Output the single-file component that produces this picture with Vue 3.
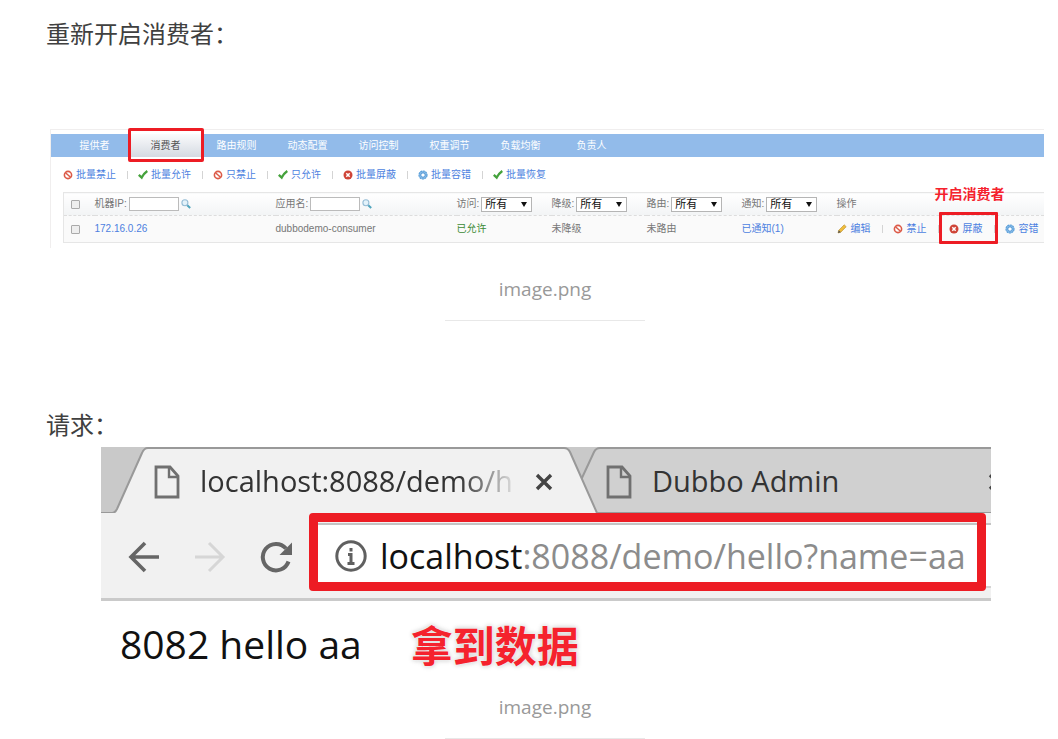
<script setup>
const tabs = ['提供者', '消费者', '路由规则', '动态配置', '访问控制', '权重调节', '负载均衡', '负责人']
const actions = [
  { icon: 'ban', text: '批量禁止' },
  { icon: 'check', text: '批量允许' },
  { icon: 'ban', text: '只禁止' },
  { icon: 'check', text: '只允许' },
  { icon: 'cross', text: '批量屏蔽' },
  { icon: 'gear', text: '批量容错' },
  { icon: 'check', text: '批量恢复' },
]
const filters = [
  { id: 'access', text: '访问:' },
  { id: 'degrade', text: '降级:' },
  { id: 'route', text: '路由:' },
  { id: 'notify', text: '通知:' },
]
const operations = [
  { icon: 'pencil', text: '编辑' },
  { icon: 'ban', text: '禁止' },
  { icon: 'cross', text: '屏蔽', marked: true },
  { icon: 'gear', text: '容错' },
]
</script>

<template>
  <svg class="defs" aria-hidden="true">
    <symbol id="ban" viewBox="0 0 10 10">
      <circle cx="5" cy="5" r="3.6" fill="#fff" stroke="#dc5a48" stroke-width="1.6" />
      <path d="M2.5 2.7l5 4.6" stroke="#dc5a48" stroke-width="1.5" />
    </symbol>
    <symbol id="check" viewBox="0 0 10 10">
      <path d="M0.8 4.8L3.7 7.6C5 5 6.6 2.9 9.3 1" fill="none" stroke="#45a23c" stroke-width="2.3" />
    </symbol>
    <symbol id="cross" viewBox="0 0 10 10">
      <circle cx="5" cy="5" r="4.5" fill="#cf4437" />
      <path d="M3.3 3.3l3.4 3.4M6.7 3.3L3.3 6.7" stroke="#fff" stroke-width="1.5" />
    </symbol>
    <symbol id="gear" viewBox="0 0 10 10">
      <circle cx="5" cy="5" r="4" fill="#8ec0ea" stroke="#5b9fd9" stroke-width="1.2" stroke-dasharray="2 .6" />
      <circle cx="5" cy="5" r="2.3" fill="none" stroke="#4a91d1" stroke-width=".8" />
      <circle cx="5" cy="5" r="1.6" fill="#fff" />
    </symbol>
    <symbol id="pencil" viewBox="0 0 10 10">
      <path d="M1 9l.8-2.8L7.2.8l2 1.9L3.8 8.2z" fill="#f0bd3c" stroke="#b98b2c" stroke-width=".6" />
      <path d="M1 9l.8-2.8 2 2z" fill="#555" />
    </symbol>
    <symbol id="search" viewBox="0 0 10 10">
      <path d="M6 6l3.2 3" stroke="#4fa5bd" stroke-width="2" />
      <circle cx="3.9" cy="3.8" r="3" fill="#e3f2fa" stroke="#96bdd6" stroke-width="1.1" />
    </symbol>
    <symbol id="file" viewBox="0 0 26 34">
      <path d="M2 2h14l8 9v21H2z" fill="none" stroke="#707070" stroke-width="2.8" />
      <path d="M15 2v10h9" fill="none" stroke="#707070" stroke-width="2.4" />
    </symbol>
  </svg>

  <main class="article">
    <p class="lead">重新开启消费者：</p>

    <figure class="figure">
      <div class="admin">
        <nav class="tabs">
          <a v-for="(t, i) in tabs" :key="t" href="#" class="tab" :class="{ active: i === 1 }">{{ t }}</a>
        </nav>
        <div class="actions">
          <button v-for="a in actions" :key="a.text" type="button" class="act">
            <svg class="ico"><use :href="'#' + a.icon" /></svg>{{ a.text }}
          </button>
        </div>
        <table class="grid">
          <colgroup>
            <col class="c-check" /><col class="c-wide" /><col class="c-wide" />
            <col class="c-mid" /><col class="c-mid" /><col class="c-mid" /><col class="c-mid" /><col />
          </colgroup>
          <thead>
            <tr>
              <th><input type="checkbox" class="box" aria-label="全选" /></th>
              <th>
                <span class="field"><label for="ip">机器IP:</label><input id="ip" type="text" class="text" /><svg class="ico"><use href="#search" /></svg></span>
              </th>
              <th>
                <span class="field"><label for="app">应用名:</label><input id="app" type="text" class="text" /><svg class="ico"><use href="#search" /></svg></span>
              </th>
              <th v-for="f in filters" :key="f.id">
                <span class="field">
                  <label :for="f.id">{{ f.text }}</label>
                  <span class="pick"><select :id="f.id"><option>所有</option></select></span>
                </span>
              </th>
              <th>操作</th>
            </tr>
          </thead>
          <tbody>
            <tr>
              <td><input type="checkbox" class="box" aria-label="172.16.0.26" /></td>
              <td><a href="#">172.16.0.26</a></td>
              <td>dubbodemo-consumer</td>
              <td class="ok">已允许</td>
              <td>未降级</td>
              <td>未路由</td>
              <td><a href="#">已通知(1)</a></td>
              <td>
                <div class="ops">
                  <button v-for="o in operations" :key="o.text" type="button" class="act" :class="{ marked: o.marked }">
                    <svg class="ico"><use :href="'#' + o.icon" /></svg>{{ o.text }}
                    <span v-if="o.marked" class="note">开启消费者</span>
                  </button>
                </div>
              </td>
            </tr>
          </tbody>
        </table>
      </div>
      <figcaption>image.png</figcaption>
    </figure>

    <p class="lead second">请求：</p>

    <figure class="figure">
      <div class="browser">
        <div class="strip">
          <svg class="shapes" viewBox="0 0 890 66" preserveAspectRatio="xMinYMin slice" aria-hidden="true">
            <path d="M480 33L493 5Q495 1 499 1H1200V66H490z" fill="#d0d0d0" />
            <path d="M480 33L493 5Q495 1 499 1H1200M490 66H1200" fill="none" stroke="#999" stroke-width="2" />
            <path d="M0 66H11Q14 66 16 62L41 6Q43 1 47 1H463Q467 1 469 5L496 66z" fill="#f1f1f1" />
            <path d="M0 66H11Q14 66 16 62L41 6Q43 1 47 1H463Q467 1 469 5L496 66" fill="none" stroke="#999" stroke-width="2" />
          </svg>
          <div class="page-tab first">
            <svg class="file"><use href="#file" /></svg>
            <span class="title fade">localhost:8088/demo/h</span>
            <button type="button" class="close" aria-label="关闭">
              <svg viewBox="0 0 18 18"><path d="M2 2l14 14M16 2L2 16" stroke="#444" stroke-width="3.4" /></svg>
            </button>
          </div>
          <div class="page-tab other">
            <svg class="file"><use href="#file" /></svg>
            <span class="title">Dubbo Admin</span>
            <button type="button" class="close cut" aria-label="关闭">
              <svg viewBox="0 0 18 18"><path d="M2 2l14 14M16 2L2 16" stroke="#444" stroke-width="3.4" /></svg>
            </button>
          </div>
        </div>
        <div class="bar">
          <button type="button" class="nav" aria-label="后退">
            <svg viewBox="0 0 32 32"><path d="M31 17H3M17 3L3 17L17 31" fill="none" stroke="#666" stroke-width="3.6" /></svg>
          </button>
          <button type="button" class="nav" aria-label="前进">
            <svg viewBox="0 0 32 32"><path d="M1 17H29M15 3L29 17L15 31" fill="none" stroke="#d6d6d6" stroke-width="3" /></svg>
          </button>
          <button type="button" class="nav" aria-label="刷新">
            <svg viewBox="0 0 32 32">
              <path d="M26 8.5A13.2 13.2 0 1 0 28.5 21.5" fill="none" stroke="#666" stroke-width="4" />
              <path d="M32 2.5V15H19.5z" fill="#666" />
            </svg>
          </button>
          <div class="address">
            <svg class="info" viewBox="0 0 32 32">
              <circle cx="16" cy="16" r="14.2" fill="none" stroke="#606060" stroke-width="3" />
              <path d="M16 8v3.5M13 14.5h3V23M12.5 23.5h7" fill="none" stroke="#606060" stroke-width="3" />
            </svg>
            <span class="url"><b>localhost</b>:8088/demo/hello?name=aa</span>
          </div>
        </div>
        <div class="result">
          <span>8082 hello aa</span>
          <strong>拿到数据</strong>
        </div>
      </div>
      <figcaption class="tight">image.png</figcaption>
    </figure>
  </main>
</template>

<style>
body {
  margin: 0;
  background: #fff;
}
</style>

<style scoped>
.defs {
  position: absolute;
  width: 0;
  height: 0;
}
.article {
  padding: 16px 14px 0 46px;
  font-family: "Open Sans", "Noto Sans CJK SC", sans-serif;
  color: #404040;
}
.lead {
  margin: 0 0 77px;
  font-size: 24px;
  line-height: 36px;
}
.second {
  margin: 86px 0 4px;
}
.figure {
  margin: 0;
}
figcaption {
  box-sizing: border-box;
  width: 200px;
  margin: 0 auto;
  padding: 27px 0 17px;
  border-bottom: 1px solid #e8e8e8;
  text-align: center;
  font-size: 19px;
  line-height: 28px;
  color: #999;
}
.tight {
  padding-top: 0;
}
button {
  margin: 0;
  padding: 0;
  border: 0;
  background: none;
  font: inherit;
  color: inherit;
}
a {
  color: #4c7fe0;
  text-decoration: none;
}

/* admin console */
.admin {
  margin-left: 4px;
  padding-top: 4px;
  padding-bottom: 5px;
  border-top: 1px solid #f0eeee;
  border-left: 1px solid #f0eeee;
  font-family: "Liberation Sans", "Noto Sans CJK SC", sans-serif;
  font-size: 10px;
  line-height: 14px;
  color: #777;
}
.tabs {
  display: flex;
  height: 23px;
  padding-left: 8px;
  background: #92bbea;
}
.tab {
  flex: 0 1 9%;
  max-width: 71px;
  line-height: 23px;
  text-align: center;
  color: #fff;
}
.tab.active {
  position: relative;
  background: linear-gradient(#fafbfc, #d5dae2);
  color: #555;
}
.tab.active::after {
  content: "";
  position: absolute;
  inset: -6px -3px -5px -2px;
  border: 3px solid #ed1c24;
  border-radius: 2px;
}
.actions {
  display: flex;
  align-items: center;
  height: 35px;
  padding: 0 0 0 12px;
}
.act {
  display: flex;
  align-items: center;
  gap: 3px;
  color: #4c7fe0;
  white-space: nowrap;
}
.act + .act::before {
  content: "";
  width: 1px;
  height: 8px;
  margin: 0 7px 0 11px;
  background: #d4d4d4;
}
.ico {
  flex: none;
  width: 10px;
  height: 10px;
}
.grid {
  width: calc(100% - 12px);
  margin-left: 12px;
  table-layout: fixed;
  border-collapse: collapse;
  border: 1px solid #e6e6e6;
  border-right: 0;
}
.c-check { width: 31px; }
.c-wide { width: 181px; }
.c-mid { width: 95px; }
th,
td {
  padding: 0;
  text-align: left;
  font-weight: normal;
  white-space: nowrap;
}
th {
  height: 22px;
  background: linear-gradient(#fff, #f2f4f5);
  border-bottom: 1px dashed #ddd;
}
td {
  height: 26px;
  background: #fafafa;
}
.ok {
  color: #3c8a35;
}
.box {
  appearance: none;
  display: block;
  box-sizing: border-box;
  width: 9px;
  height: 9px;
  margin: 0 0 0 7px;
  border: 1px solid #aaa;
  border-radius: 1px;
  background: #eee;
}
.field {
  display: flex;
  align-items: center;
  gap: 2px;
}
.text {
  box-sizing: border-box;
  width: 50px;
  height: 14px;
  margin: 0;
  padding: 0;
  border: 1px solid #bbb;
  background: #fff;
}
.pick {
  position: relative;
}
.pick::after {
  content: "";
  position: absolute;
  top: 5px;
  right: 5px;
  border: 3px solid transparent;
  border-top: 5px solid #111;
  border-bottom: 0;
}
select {
  appearance: none;
  display: block;
  box-sizing: border-box;
  width: 51px;
  height: 15px;
  padding: 0 0 0 3px;
  border: 1px solid #b5b5b5;
  border-radius: 0;
  background: #fff;
  font: 11px/13px "Liberation Sans", "Noto Sans CJK SC", sans-serif;
  color: #111;
}
.ops {
  display: flex;
}
.ops .act {
  gap: 4px;
}
.ops .act + .act::before {
  margin: 0 6px 0 11px;
}
.marked {
  position: relative;
}
.marked::after {
  content: "";
  position: absolute;
  inset: -10px -15px -8px 12px;
  border: 3px solid #ed1c24;
  border-radius: 1px;
}
.note {
  position: absolute;
  left: 8px;
  bottom: 32px;
  font-size: 14px;
  line-height: 20px;
  font-weight: bold;
  color: #f5222d;
}

/* browser window */
.browser {
  margin: 0 53px 0 55px;
  overflow: hidden;
}
.strip {
  position: relative;
  display: flex;
  height: 66px;
  background: #c9c9c9;
  overflow: hidden;
}
.shapes {
  position: absolute;
  left: 0;
  top: 0;
  width: 100%;
  height: 66px;
}
.page-tab {
  position: relative;
  display: flex;
  align-items: center;
  flex: none;
  box-sizing: border-box;
  padding-top: 4px;
  font-size: 29px;
  line-height: 38px;
  color: #333;
}
.first {
  width: 495px;
  padding-left: 53px;
}
.other {
  flex: 1 0 400px;
  padding-left: 10px;
}
.file {
  width: 26px;
  height: 34px;
  margin-right: 20px;
}
.title {
  padding-bottom: 2px;
  white-space: nowrap;
}
.fade {
  mask-image: linear-gradient(to right, #000 83%, transparent 102%);
}
.close {
  display: flex;
  margin-left: 22px;
}
.close svg {
  width: 18px;
  height: 18px;
}
.cut {
  margin-left: 149px;
}
.bar {
  display: flex;
  align-items: center;
  box-sizing: border-box;
  height: 88px;
  padding-left: 27px;
  border-bottom: 3px solid #cacaca;
  background: #f1f1f1;
}
.nav {
  display: flex;
  margin-right: 34px;
}
.nav svg {
  width: 32px;
  height: 32px;
  overflow: visible;
}
.address {
  position: relative;
  display: flex;
  align-items: center;
  flex: 1;
  gap: 13px;
  box-sizing: border-box;
  height: 65px;
  margin-left: -9px;
  padding-left: 18px;
  border-top: 2px solid #c4c4c4;
  border-bottom: 2px solid #d4d4d4;
  background: #fff;
}
.address::after {
  content: "";
  position: absolute;
  inset: -12px 5px -5px -8px;
  border: 9px solid #ed1c24;
  border-radius: 4px;
}
.info {
  flex: none;
  width: 32px;
  height: 32px;
}
.url {
  font-size: 34px;
  line-height: 48px;
  white-space: nowrap;
  color: #8c8c8c;
}
.url b {
  font-weight: normal;
  color: #111;
}
.result {
  display: flex;
  align-items: center;
  gap: 49px;
  box-sizing: border-box;
  height: 92px;
  padding: 0 0 6px 19px;
  font-size: 39px;
  line-height: 52px;
  color: #111;
}
.result strong {
  padding-top: 4px;
  font-size: 42px;
  color: #f5222d;
  text-shadow: 0 0 2px #fff, 0 0 4px #ccc, 0 0 6px #ddd;
}
</style>
